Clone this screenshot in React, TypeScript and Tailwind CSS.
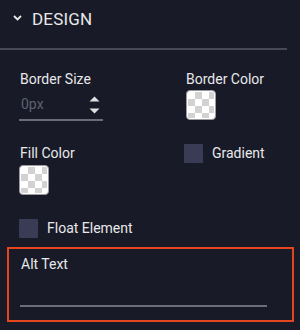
import React from "react";

const Checker = () => (
  <div className="w-[30px] h-[30px] rounded-[4px] border border-[#9a9aa0] overflow-hidden bg-white p-[1px]">
    <div
      className="w-full h-full rounded-[2px]"
      style={{
        background: "repeating-conic-gradient(#d2d2d2 0 25%, #ffffff 0 50%) 0 0 / 14px 14px",
      }}
    />
  </div>
);

const Box = () => <div className="w-[19px] h-[19px] rounded-[1px] bg-[#3a3c55]" />;

export default function App() {
  return (
    <div
      className="w-[300px] h-[330px] bg-[#181a27] overflow-hidden text-[#e8e8ea] relative"
      style={{ fontFamily: "Roboto, 'Liberation Sans', sans-serif" }}
    >
      <div className="w-[287px] h-[50px] border-b-2 border-[#474957] flex items-start pl-[13px] pt-[9px]">
        <svg width="9" height="6" viewBox="0 0 9 6" className="mr-[10px] mt-[6px]">
          <path d="M1 1 L4.5 4.5 L8 1" stroke="#e8e8ea" strokeWidth="1.8" fill="none" />
        </svg>
        <span className="text-[17px] tracking-[0.2px] leading-[17px] mt-[2px]">DESIGN</span>
      </div>

      <div className="flex pt-[19px] pl-[20px]">
        <div className="w-[166px] flex flex-col">
          <div className="text-[14px] leading-[20px]">Border Size</div>
          <div className="w-[84px] h-[32px] -ml-[1px] border-b-2 border-[#6b6d7c] flex items-center justify-between pl-[2px] pr-[3px]">
            <span className="text-[14px] text-[#5f6170] mt-[1px]">0px</span>
            <div className="flex flex-col gap-[6px] mt-[1px]">
              <svg width="11" height="6" viewBox="0 0 11 6">
                <path d="M5.5 0.5 L10.5 5.5 L0.5 5.5 Z" fill="#e0e0e4" />
              </svg>
              <svg width="11" height="6" viewBox="0 0 11 6">
                <path d="M0.5 0.5 L10.5 0.5 L5.5 5.5 Z" fill="#e0e0e4" />
              </svg>
            </div>
          </div>
        </div>
        <div className="flex flex-col">
          <div className="text-[14px] leading-[20px]">Border Color</div>
          <div className="mt-[1px]">
            <Checker />
          </div>
        </div>
      </div>

      <div className="flex pt-[22px] pl-[20px]">
        <div className="w-[164px] flex flex-col">
          <div className="text-[14px] leading-[20px]">Fill Color</div>
          <div className="mt-[2px] -ml-[1px]">
            <Checker />
          </div>
        </div>
        <div className="flex items-start gap-[9px] pt-[1px]">
          <Box />
          <span className="text-[14px] leading-[20px] -mt-[1px]">Gradient</span>
        </div>
      </div>

      <div className="flex items-center gap-[9px] pl-[19px] pt-[23px]">
        <Box />
        <span className="text-[14px] leading-[20px]">Float Element</span>
      </div>

      <div className="ml-[7px] mt-[9px] w-[287px] h-[75px] border-2 border-[#e5451d] pt-[5px] pl-[11px]">
        <div className="text-[14px] leading-[20px] ml-[1px]">Alt Text</div>
        <div className="mt-[31px] w-[247px] border-b-2 border-[#6b6d7c]" />
      </div>
    </div>
  );
}
